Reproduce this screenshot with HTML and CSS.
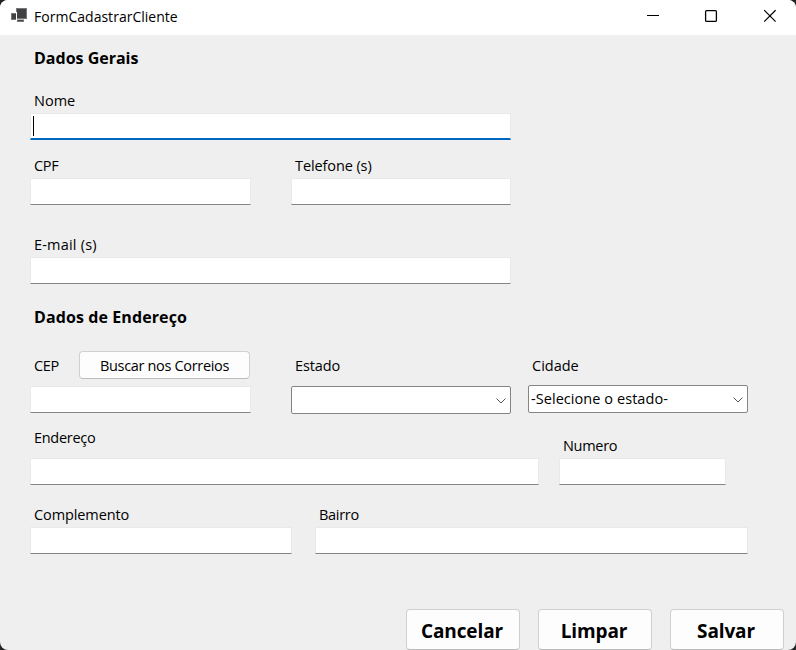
FILE: index.html
```html
<!DOCTYPE html>
<html lang="pt-BR">
<head>
<meta charset="utf-8">
<title>FormCadastrarCliente</title>
<link rel="stylesheet" href="styles.css">
</head>
<body>
<div class="window">
  <header class="titlebar">
    <svg class="app-icon" width="16" height="15" viewBox="0 0 16 15"><path fill="#77777a" d="M5 0h11v11h-3v3H6v-2H0V5h5z"/><path fill="#414143" d="M6 1h9v9H6zM1 6h4v5H1zM7 12h5v1H7z"/><path fill="#fff" d="M5 4h1v8H5zM6 11h7v.6H6z"/></svg>
    <h1 class="title">FormCadastrarCliente</h1>
    <svg class="controls" width="130" height="14" viewBox="0 0 130 14" fill="none" stroke="#000"><path stroke-width="1" d="M1 6.500h12"/><rect x="59.600" y="1.600" width="10.800" height="10.800" rx="1" stroke-width="1.300"/><path stroke-width="1.200" d="M118.200 1.200l11.400 11.400M129.600 1.200l-11.400 11.400"/></svg>
  </header>
  <main class="form">
    <h2 class="heading">Dados Gerais</h2>
    <div class="row row-name">
      <label class="field w-full"><span class="label">Nome</span><span class="input focused"><span class="caret"></span></span></label>
    </div>
    <div class="row row-contact">
      <label class="field w-small"><span class="label tight">CPF</span><span class="input"></span></label>
      <label class="field w-phone"><span class="label snug">Telefone (s)</span><span class="input"></span></label>
    </div>
    <div class="row row-email">
      <label class="field w-full"><span class="label loose">E-mail (s)</span><span class="input"></span></label>
    </div>
    <h2 class="heading heading-address">Dados de Endereço</h2>
    <div class="row row-cep">
      <div class="field w-small">
        <div class="cep-head"><span class="label tight">CEP</span><button class="button lookup">Buscar nos Correios</button></div>
        <span class="input"></span>
      </div>
      <div class="field w-combo estado"><span class="label snug">Estado</span>
        <div class="combo"><span></span><svg width="10" height="6" viewBox="0 0 10 6" fill="none" stroke="#555"><path d="M.5.5L5 5 9.500.5"/></svg></div>
      </div>
      <div class="field w-combo cidade"><span class="label">Cidade</span>
        <div class="combo"><span class="combo-text">-Selecione o estado-</span><svg width="10" height="6" viewBox="0 0 10 6" fill="none" stroke="#555"><path d="M.5.5L5 5 9.500.5"/></svg></div>
      </div>
    </div>
    <div class="row row-street">
      <label class="field w-street"><span class="label label-street tight">Endereço</span><span class="input"></span></label>
      <label class="field w-number"><span class="label tight">Numero</span><span class="input"></span></label>
    </div>
    <div class="row row-district">
      <label class="field w-complement"><span class="label snug">Complemento</span><span class="input"></span></label>
      <label class="field w-district"><span class="label tight">Bairro</span><span class="input"></span></label>
    </div>
    <div class="actions">
      <button class="button action">Cancelar</button>
      <button class="button action">Limpar</button>
      <button class="button action">Salvar</button>
    </div>
  </main>
</div>
</body>
</html>
```
FILE: styles.css
```css
* { box-sizing: border-box; }
body { margin: 0; background: #222; overflow: hidden; }
.window {
  width: 796px; height: 650px; overflow: hidden;
  border-radius: 8px; background: #efefef; color: #000;
  font: 14.5px/20px "Open Sans", "Noto Sans", sans-serif;
}
.titlebar { display: flex; align-items: center; height: 35px; padding: 0 20px 3px 11px; background: #fff; }
.app-icon { margin-right: 7px; margin-top: -1px; }
.title { margin: 0; font-size: 14px; font-weight: 400; letter-spacing: .02px; padding-top: 1px; }
.controls { margin-left: auto; }
.form { padding: 11px 12px 0 30px; }
.heading { margin: 0; padding-left: 4px; font-size: 16px; line-height: 24px; font-weight: 700; }
.heading-address { margin-top: 21px; letter-spacing: .1px; }
.row { display: flex; align-items: flex-end; }
.row-name { margin-top: 21px; }
.row-contact { margin-top: 16px; gap: 40px; }
.row-email { margin-top: 30px; }
.row-cep { margin-top: 22px; height: 63px; align-items: flex-start; }
.row-street { margin-top: 14px; gap: 20px; }
.row-district { margin-top: 20px; gap: 23px; }
.field { display: flex; flex-direction: column; gap: 2px; }
.label { padding-left: 4px; height: 20px; white-space: nowrap; }
.tight { letter-spacing: -.3px; }
.snug { letter-spacing: -.1px; }
.loose { letter-spacing: .2px; }
.label-street { margin-bottom: 8px; }
.w-full { width: 481px; }
.w-small { width: 221px; }
.w-phone { width: 220px; }
.w-combo { width: 220px; }
.w-street { width: 509px; }
.w-number { width: 167px; }
.w-complement { width: 262px; }
.w-district { width: 433px; }
.input { display: block; height: 27px; background: #fff; border: 1px solid #e9e9e9; border-bottom-color: #858585; }
.focused { padding: 2px 0 0 2px; border-bottom: 2px solid #0067c0; }
.caret { display: block; width: 1px; height: 20px; background: #000; }
.cep-head { display: flex; align-items: center; justify-content: space-between; height: 28px; margin-bottom: 5px; padding-right: 1px; }
.cep-head .label { margin-top: 2px; }
.button { padding: 0; border: 1px solid #d0d0d0; border-bottom-color: #bcbcbc; border-radius: 4px; background: #fdfdfd; color: #000; font: inherit; }
.lookup { width: 171px; height: 28px; padding-top: 2px; letter-spacing: -.33px; }
.estado, .cidade { padding-top: 5px; gap: 10px; }
.estado { margin-left: 40px; }
.cidade { margin-left: 17px; gap: 9px; }
.combo { display: flex; align-items: center; justify-content: space-between; height: 28px; padding: 0 5px 0 2px; border: 1px solid #858585; border-radius: 2px; background: #fff; }
.combo-text { letter-spacing: .06px; }
.combo svg { position: relative; left: 1px; top: 1px; }
.actions { display: flex; justify-content: flex-end; gap: 18px; margin-top: 55px; }
.action { width: 114px; height: 41px; font-size: 19px; font-weight: 700; padding: 2px 2px 0 0; letter-spacing: -.12px; }
```
